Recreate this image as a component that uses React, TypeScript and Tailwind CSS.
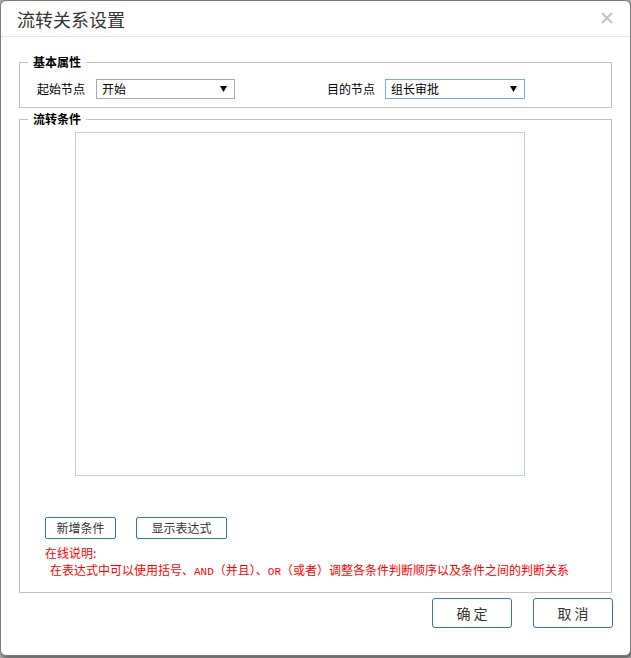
const Caret = () => (
  <svg width="7" height="6" viewBox="0 0 7 6" className="shrink-0">
    <path d="M0 0H7L3.5 6Z" fill="#000" />
  </svg>
);

const Select = ({ value, width, focused }: { value: string; width: string; focused?: boolean }) => (
  <div
    className={`${width} h-[20px] flex items-center justify-between pl-[5px] pr-[7px] bg-white border ${
      focused ? 'border-[#7aa9e6]' : 'border-[#a9a9a9]'
    }`}
  >
    <span className="text-[12px] leading-[16px] text-black">{value}</span>
    <Caret />
  </div>
);

const App = () => {
  return (
    <div className="w-[631px] h-[658px] bg-[#a3a3a3] font-['Noto_Sans_CJK_SC',sans-serif] text-[12px] text-black">
      <div className="h-[656px] bg-white border border-[#7d7d7d] rounded-[6px] flex flex-col shadow-[1px_2px_2px_rgba(0,0,0,0.35)]">
        {/* header */}
        <div className="h-[36px] shrink-0 border-b border-[#e5e5e5] pl-[16px] pr-[17px] flex items-center justify-between">
          <h3 className="text-[18px] leading-[24px] text-[#333] font-normal">流转关系设置</h3>
          <svg width="12" height="12" viewBox="0 0 12 12" className="mb-[2px]">
            <path d="M1 1L11 11M11 1L1 11" stroke="#c4c4c4" strokeWidth="2" />
          </svg>
        </div>

        <div className="px-[18px]">
          {/* 基本属性 */}
          <fieldset className="mt-[17px] border border-[#c3c3c3]">
            <legend className="ml-[8px] px-[5px] text-[12px] leading-[16px] font-bold">基本属性</legend>
            <div className="pt-[9px] pb-[8px] pl-[17px] flex items-center">
              <span className="w-[59px] leading-[16px]">起始节点</span>
              <Select value="开始" width="w-[139px]" />
              <span className="ml-[92px] w-[58px] leading-[16px]">目的节点</span>
              <Select value="组长审批" width="w-[140px]" focused />
            </div>
          </fieldset>

          {/* 流转条件 */}
          <fieldset className="mt-[3px] border border-[#c3c3c3]">
            <legend className="ml-[8px] px-[5px] text-[12px] leading-[16px] font-bold">流转条件</legend>
            <div className="pt-[5px] pb-[11px] pl-[25px]">
              <div className="ml-[30px] w-[450px] h-[344px] border border-[#bcd3e2]" />
              <div className="mt-[41px] flex gap-[20px]">
                <button className="w-[71px] h-[22px] border border-[#2b7ba6] rounded-[2px] text-[12px] text-[#333] leading-[16px]">
                  新增条件
                </button>
                <button className="w-[91px] h-[22px] border border-[#2b7ba6] rounded-[2px] text-[12px] text-[#333] leading-[16px]">
                  显示表达式
                </button>
              </div>
              <div className="mt-[5px] text-[#f00] leading-[17px]">
                <p>在线说明:</p>
                <p className="pl-[5px] whitespace-nowrap">
                  在表达式中可以使用括号、<span className="font-['Liberation_Mono',monospace] text-[11px]">AND</span>（并且）、
                  <span className="font-['Liberation_Mono',monospace] text-[11px]">OR</span>（或者）调整各条件判断顺序以及条件之间的判断关系
                </p>
              </div>
            </div>
          </fieldset>
        </div>

        {/* footer */}
        <div className="mt-[5px] pr-[17px] flex justify-end gap-[21px]">
          <button className="w-[80px] h-[30px] border border-[#2b7ba6] rounded-[3px] text-[14px] text-[#333]">
            确 定
          </button>
          <button className="w-[80px] h-[30px] border border-[#2b7ba6] rounded-[3px] text-[14px] text-[#333]">
            取 消
          </button>
        </div>
      </div>
    </div>
  );
};

export default App;
